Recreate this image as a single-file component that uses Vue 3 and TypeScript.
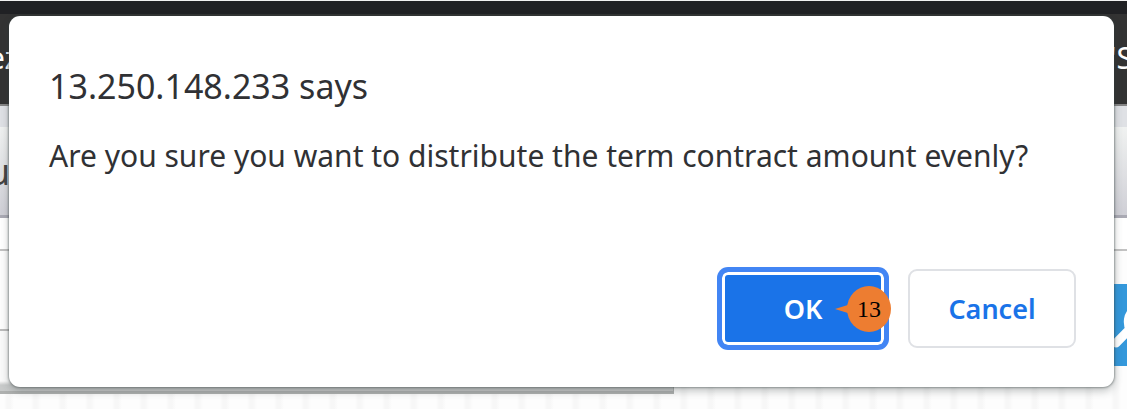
<script setup lang="ts">
import { ref } from 'vue'

const open = ref(true)
const step = 13
const close = () => {
  open.value = false
}
</script>

<template>
  <div class="screen">
    <div class="page" aria-hidden="true">
      <div class="chrome"></div>
      <div class="header">
        <span>ez</span>
        <span>'S</span>
      </div>
      <div class="strip"></div>
      <div class="title">u</div>
      <div class="row"></div>
      <div class="row dotted">
        <span class="tool">
          <svg viewBox="0 0 82 82" fill="none" stroke="#fff" stroke-width="9" stroke-linecap="round">
            <path d="M2 59 L16 45" />
            <path d="M19 27 C14 31 13 39 16 45" />
          </svg>
        </span>
      </div>
      <div class="panel"></div>
      <div class="rest"></div>
    </div>

    <div v-if="open" class="overlay">
      <section class="dialog" role="dialog" aria-labelledby="dialog-title" aria-describedby="dialog-text">
        <h1 id="dialog-title">13.250.148.233 says</h1>
        <p id="dialog-text">Are you sure you want to distribute the term contract amount evenly?</p>
        <div class="actions">
          <button class="ok" type="button" @click="close">
            OK
            <span class="callout">
              <svg viewBox="0 0 56 46">
                <path d="M0 23 L16 18 V28 Z" fill="#ed7d31" />
                <ellipse cx="34" cy="23" rx="22" ry="23" fill="#ed7d31" />
              </svg>
              <span class="number">{{ step }}</span>
            </span>
          </button>
          <button class="cancel" type="button" @click="close">Cancel</button>
        </div>
      </section>
    </div>
  </div>
</template>

<style>
body {
  margin: 0;
}
</style>

<style scoped>
.screen {
  position: relative;
  min-height: 100vh;
  display: flex;
  overflow: hidden;
  font-family: "Noto Sans", "Open Sans", sans-serif;
}
.page {
  flex: 1;
  min-width: 0;
  display: flex;
  flex-direction: column;
  background: repeating-linear-gradient(90deg, #fdfdfd 0 4px, #f7f7f7 7px 10px, #fdfdfd 14px 27px);
}
.page > div {
  box-sizing: border-box;
}
.chrome {
  height: 14px;
  border-top: 1px solid #f1f1f1;
  background: #202124;
}
.header {
  height: 92px;
  display: flex;
  justify-content: space-between;
  background: #333;
  border-bottom: 2px solid #858585;
  color: #fff;
  font-size: 30px;
  line-height: 88px;
}
.header span:first-child {
  margin-left: -12px;
}
.header span:last-child {
  margin-right: -6px;
}
.strip {
  height: 21px;
  background: #dfe1e5;
}
.title {
  height: 91px;
  background: linear-gradient(#f0f2f1, #cfcfd6);
  border-bottom: 3px solid #aaaab4;
  color: #444;
  font-size: 36px;
  line-height: 90px;
  text-indent: -12px;
}
.row {
  height: 33px;
  background: #fff;
  border-bottom: 2px solid #c2c2c2;
}
.row.dotted {
  display: flex;
  justify-content: flex-end;
  align-items: flex-start;
  height: 80px;
  background: none;
  border-bottom-color: #bbb;
}
.tool {
  flex: none;
  width: 82px;
  height: 82px;
  margin: 33px -69px 0 0;
  background: #3498db;
}
.tool svg {
  display: block;
}
.panel {
  width: 674px;
  height: 63px;
  border-bottom: 3px solid #aeb0af;
  border-right: 1px solid #aeb0af;
  background: linear-gradient(#fafafa 50px, #c8caca 54px);
}
.rest {
  flex: 1;
}
.overlay {
  position: absolute;
  inset: 0;
  display: flex;
  padding: 16px 13px 22px 9px;
}
.dialog {
  flex: 1;
  display: flex;
  flex-direction: column;
  box-sizing: border-box;
  padding: 46px 38px 39px 40px;
  border-radius: 11px;
  background: #fff;
  box-shadow: 0 0 2px 1px rgba(50, 60, 60, 0.4), 0 4px 8px rgba(50, 60, 60, 0.3);
  color: #303134;
}
h1 {
  margin: 0;
  font-size: 34px;
  line-height: 48px;
  font-weight: 400;
}
p {
  margin: 26px 0 0;
  font-size: 30px;
  line-height: 40px;
}
.actions {
  display: flex;
  justify-content: flex-end;
  gap: 21px;
  margin-top: auto;
}
button {
  position: relative;
  box-sizing: border-box;
  width: 168px;
  height: 79px;
  padding: 0;
  border: 2px solid #dfe1e5;
  border-radius: 9px;
  background: #fff;
  color: #1a73e8;
  font-family: inherit;
  font-size: 27px;
  line-height: 40px;
  font-weight: 600;
}
.ok {
  border: 3px solid #4285f4;
  background: #1a73e8;
  box-shadow: 0 0 0 2px #4285f4, inset 0 0 0 3px #fff;
  color: #fff;
}
.callout {
  position: absolute;
  right: -7px;
  top: 14px;
  width: 56px;
  height: 46px;
}
.callout svg {
  display: block;
}
.number {
  position: absolute;
  inset: 0 0 0 12px;
  color: #000;
  font: 24px/46px "Liberation Serif", serif;
  text-align: center;
}
</style>
